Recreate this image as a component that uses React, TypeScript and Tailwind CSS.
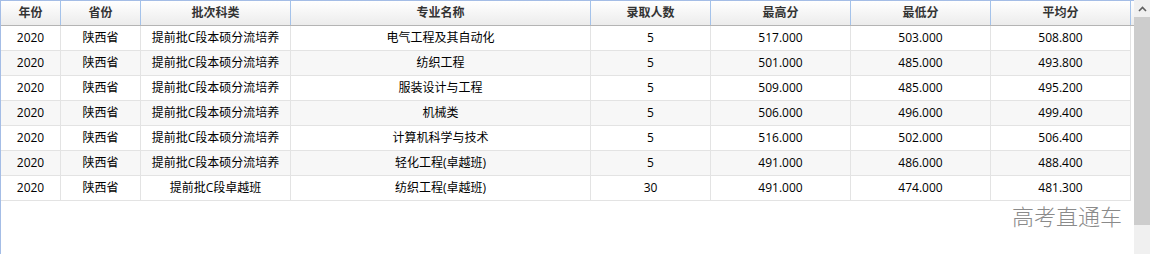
import React from "react";

const cols = [
  { key: "year", label: "年份", w: "w-[60px]" },
  { key: "prov", label: "省份", w: "w-[80px]" },
  { key: "batch", label: "批次科类", w: "w-[150px]" },
  { key: "major", label: "专业名称", w: "w-[300px]" },
  { key: "count", label: "录取人数", w: "w-[120px]" },
  { key: "max", label: "最高分", w: "w-[140px]" },
  { key: "min", label: "最低分", w: "w-[140px]" },
  { key: "avg", label: "平均分", w: "w-[140px]" },
];

const rows = [
  ["2020", "陕西省", "提前批C段本硕分流培养", "电气工程及其自动化", "5", "517.000", "503.000", "508.800"],
  ["2020", "陕西省", "提前批C段本硕分流培养", "纺织工程", "5", "501.000", "485.000", "493.800"],
  ["2020", "陕西省", "提前批C段本硕分流培养", "服装设计与工程", "5", "509.000", "485.000", "495.200"],
  ["2020", "陕西省", "提前批C段本硕分流培养", "机械类", "5", "506.000", "496.000", "499.400"],
  ["2020", "陕西省", "提前批C段本硕分流培养", "计算机科学与技术", "5", "516.000", "502.000", "506.400"],
  ["2020", "陕西省", "提前批C段本硕分流培养", "轻化工程(卓越班)", "5", "491.000", "486.000", "488.400"],
  ["2020", "陕西省", "提前批C段卓越班", "纺织工程(卓越班)", "30", "491.000", "474.000", "481.300"],
];

export default function App() {
  return (
    <div
      className="relative w-[1150px] h-[254px] flex bg-white overflow-hidden text-[12px]"
      style={{ fontFamily: '"Open Sans", "Noto Sans CJK SC", sans-serif' }}
    >
      {/* grid area */}
      <div className="w-[1134px] h-full border-l border-t border-[#a4bde6]">
        {/* header */}
        <div className="flex h-[25px] bg-gradient-to-b from-white to-[#ececec] border-b border-[#b4b4b4]">
          {cols.map((c) => (
            <div
              key={c.key}
              className={`${c.w} shrink-0 flex items-center justify-center border-r border-[#a4c2ea] font-bold text-[#333]`}
            >
              {c.label}
            </div>
          ))}
        </div>

        {/* body */}
        <div className="w-[1130px]">
          {rows.map((r, i) => (
            <div
              key={i}
              className={`flex h-[25px] border-b border-[#e3e3e3] ${i % 2 === 1 ? "bg-[#f7f7f7]" : "bg-white"}`}
            >
              {r.map((v, j) => (
                <div
                  key={j}
                  className={`${cols[j].w} shrink-0 flex items-center justify-center border-r border-[#e3e3e3] text-black`}
                >
                  {v}
                </div>
              ))}
            </div>
          ))}
        </div>
      </div>

      {/* scrollbar */}
      <div className="w-[16px] h-full flex flex-col bg-[#f0f0f0]">
        <div className="h-[17px] flex items-center justify-center">
          <svg width="9" height="6" viewBox="0 0 9 6">
            <path d="M1 5 L4.5 1.5 L8 5" fill="none" stroke="#606060" strokeWidth="1.6" />
          </svg>
        </div>
        <div className="h-[208px] bg-[#cdcdcd]" />
      </div>

      {/* watermark */}
      <div
        className="absolute right-[28px] top-[199px] text-[22px] font-light text-[#8a8a8a] tracking-[0px]"
        style={{ fontFamily: '"Noto Sans CJK SC", sans-serif' }}
      >
        高考直通车
      </div>
    </div>
  );
}
